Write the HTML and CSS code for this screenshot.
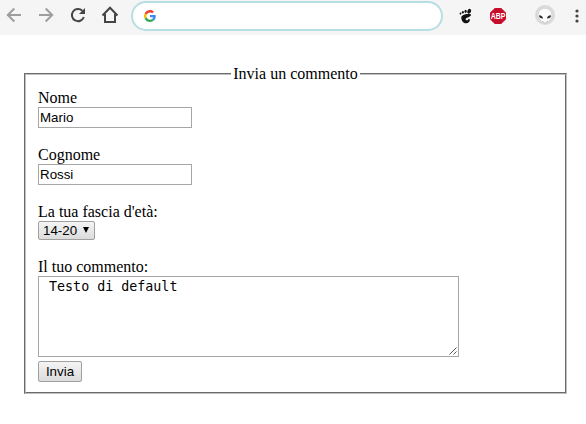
FILE: index.html
```html
<!DOCTYPE html>
<html lang="it">
<head>
<meta charset="utf-8">
<title>Invia un commento</title>
<link rel="stylesheet" href="styles.css">
</head>
<body>
<header class="toolbar">
  <svg class="back" width="16" height="16" viewBox="0 0 16 16" fill="none" stroke="#9e9e9e" stroke-width="2"><path d="M15 8H2M8.3 1.5 1.8 8l6.500 6.500"/></svg>
  <svg class="forward" width="16" height="16" viewBox="0 0 16 16" fill="none" stroke="#9e9e9e" stroke-width="2"><path d="M1 8h13M7.700 1.500 14.200 8l-6.500 6.500"/></svg>
  <svg class="reload" width="16" height="16" viewBox="0 0 16 16"><path d="M13.800 10A6.100 6.100 0 1 1 12.300 3.700" fill="none" stroke="#444" stroke-width="2"/><path d="M15 1v6H9z" fill="#444"/></svg>
  <svg class="home" width="18" height="18" viewBox="0 0 18 18" fill="none" stroke="#444" stroke-width="2"><path d="M1.500 9.500 9 1.800l7.500 7.700M4 8v8h10V8"/></svg>
  <div class="omnibox">
    <svg width="12" height="12" viewBox="0 0 48 48"><path fill="#ea4335" d="M24 9.500c3.500 0 6.700 1.200 9.200 3.600l6.900-6.900C35.900 2.400 30.500 0 24 0 14.600 0 6.500 5.400 2.600 13.200l8 6.200C12.400 13.700 17.700 9.500 24 9.500z"/><path fill="#4285f4" d="M47 24.500c0-1.600-.2-3.100-.4-4.500H24v9h12.900c-.6 3-2.300 5.500-4.800 7.200l7.700 6C44.400 38 47 32 47 24.500z"/><path fill="#fbbc05" d="M10.500 28.600a14.500 14.500 0 0 1 0-9.200l-8-6.200a24 24 0 0 0 0 21.600z"/><path fill="#34a853" d="M24 48c6.500 0 11.900-2.100 15.900-5.800l-7.700-6c-2.200 1.500-4.900 2.300-8.200 2.300-6.300 0-11.600-4.200-13.500-9.900l-8 6.200C6.500 42.600 14.600 48 24 48z"/></svg>
  </div>
  <svg class="foot" width="14" height="16" viewBox="0 0 14 16" fill="#111"><ellipse cx="10.200" cy="3.200" rx="1.800" ry="2.500" transform="rotate(25 10.200 3.200)"/><ellipse cx="6.600" cy="3.300" rx="1.100" ry="1.600"/><ellipse cx="3.900" cy="4.300" rx="1" ry="1.300"/><ellipse cx="1.500" cy="5.600" rx=".9" ry="1.100"/><path d="M11.500 6.300C8 5.500 2.300 6.500 2.300 9.700c0 2.500 1.700 5.600 4.800 5.600 2.400 0 4-1.700 3.700-3.700-.2-1.100-1.200-1-1.600-.2-.4.900-1.500 1.200-2.200.5-.9-1 .1-2 1.700-2.400 2.400-.6 4.500-2.600 2.800-3.200z"/></svg>
  <svg class="abp" width="16" height="16" viewBox="0 0 16 16"><path d="M4.800 0h6.400L16 4.800v6.400L11.200 16H4.800L0 11.200V4.800z" fill="#c70d2c"/><text transform="translate(8 11) scale(.82 1)" text-anchor="middle">ABP</text></svg>
  <svg class="alien" width="20" height="20" viewBox="0 0 20 20"><circle cx="10" cy="10" r="10" fill="#dadada"/><path d="M10 4c4 0 6.300 2.500 6.300 6 0 3.500-3.800 7.500-6.300 8.500-2.500-1-6.300-5-6.300-8.500C3.700 6.500 6 4 10 4z" fill="#fff"/><path d="M4 10.300c2.200 0 3.800 1 4 3.200-2.200.3-4-.8-4-3.200zM16 10.300c-2.200 0-3.800 1-4 3.200 2.200.3 4-.8 4-3.200z" fill="#333"/><path d="m7 16 3 2.400 3-2.400" stroke="#bbb" fill="none"/></svg>
  <svg class="dots" width="4" height="14" viewBox="0 0 4 14" fill="#444"><circle cx="2" cy="2" r="1.600"/><circle cx="2" cy="7" r="1.600"/><circle cx="2" cy="12" r="1.600"/></svg>
</header>
<main>
  <form>
    <fieldset>
      <legend>Invia un commento</legend>
      <div class="field"><label for="nome">Nome</label><input id="nome" type="text" value="Mario"></div>
      <div class="field"><label for="cognome">Cognome</label><input id="cognome" type="text" value="Rossi"></div>
      <div class="field"><label for="eta">La tua fascia d'età:</label>
        <div class="select"><select id="eta"><option>14-20</option></select><svg width="6" height="6" viewBox="0 0 7 7"><path d="M0 0h7L3.500 7z"/></svg></div>
      </div>
      <div class="comment"><label for="commento">Il tuo commento:</label>
        <div class="area"><textarea id="commento" spellcheck="false"> Testo di default</textarea><svg width="8" height="8" viewBox="0 0 8 8" stroke="#444" stroke-width=".9"><path d="M.5 7.500l7-7M4.500 7.500l3-3"/></svg></div>
      </div>
      <button type="button">Invia</button>
    </fieldset>
  </form>
</main>
</body>
</html>
```
FILE: styles.css
```css
* { box-sizing: border-box; }
body { margin: 0; background: #fff; color: #000; font: 16px/18px "Liberation Serif", serif; overflow: hidden; }
.toolbar { display: flex; align-items: center; height: 35px; padding: 0 0 5px 6px; background: #f5f5f5; }
.toolbar svg { display: block; flex: none; }
.forward { margin-left: 16px; }
.reload { margin-left: 16px; }
.home { margin-left: 15px; }
.omnibox { display: flex; align-items: center; flex: none; width: 312px; height: 30px; margin: 2px 0 0 12px; padding-left: 11px; border: 2px solid #b7dfe3; border-radius: 15px; background: #fff; }
.foot { margin: 2px 0 0 16px; }
.abp { margin: 2px 0 0 17px; }
.abp text { font: bold 8.5px "Liberation Sans", sans-serif; fill: #fff; }
.alien { margin-left: 29px; }
.dots { margin: 1px 0 0 20px; }
main { padding: 30px 19px 0 24px; }
fieldset { min-width: 0; height: 329px; margin: 0; padding: 6px 12px 10px; border: 2px groove #c0c0c0; }
legend { height: 18px; margin: 0 auto; padding: 0 2px; }
label { display: block; height: 18px; }
.field { margin-bottom: 18px; }
input { display: block; width: 154px; height: 21px; margin: 0; padding: 1px; border: 1px solid #a6a6a6; border-radius: 0; background: #fff; font: 13.333px "Liberation Sans", sans-serif; color: #000; }
.select { position: relative; width: 57px; height: 19px; }
select { appearance: none; display: block; width: 57px; height: 19px; margin: 0; padding: 0 4px; border: 1px solid #a0a0a0; border-radius: 2px; background: linear-gradient(#f4f4f4, #dcdcdc); font: 13.333px "Liberation Sans", sans-serif; color: #000; }
.select svg { position: absolute; left: 45px; top: 6px; pointer-events: none; }
.area { position: relative; width: 421px; height: 81px; }
textarea { display: block; width: 421px; height: 81px; margin: 0; padding: 2px; border: 1px solid #a6a6a6; border-radius: 0; resize: none; font: 13.333px/16px "DejaVu Sans Mono", monospace; color: #000; }
.area svg { position: absolute; right: 2px; bottom: 2px; }
button { display: block; width: 44px; height: 21px; margin: 4px 0 0; padding: 0; border: 1px solid #a0a0a0; border-radius: 2px; background: linear-gradient(#f4f4f4, #dcdcdc); font: 13.333px "Liberation Sans", sans-serif; color: #000; }
```
